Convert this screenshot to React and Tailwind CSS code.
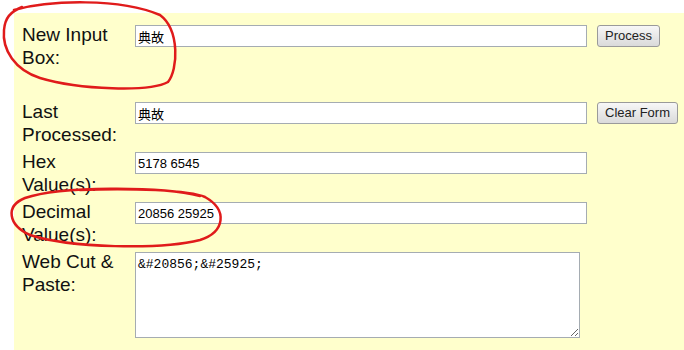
import React from "react";

const sans = "font-['Liberation_Sans','Noto_Sans_CJK_SC',Arial,sans-serif]";

function Field({ value }) {
    return (
        <input
            readOnly
            value={value}
            className={`${sans} mt-[2px] h-[22px] w-[452px] border border-[#a5acb2] bg-white px-[2px] text-[13px] text-black outline-none`}
        />
    );
}

function Btn({ children }) {
    return (
        <button
            className={`${sans} ml-[10px] mt-[2px] h-[22px] rounded-[3px] border border-[#9a9a9a] bg-gradient-to-b from-[#f7f7f7] to-[#dadada] px-[7px] text-[13px] text-[#222]`}
        >
            {children}
        </button>
    );
}

function Label({ children }) {
    return (
        <div className={`${sans} w-[121px] shrink-0 pl-[8px] text-[19px] leading-[23px] text-[#111]`}>
            {children}
        </div>
    );
}

export default function App() {
    return (
        <div className="relative h-[350px] w-[684px] overflow-hidden bg-white pl-[14px] pt-[13px]">
            <div className="h-full w-full bg-[#ffffcc] pt-[10px]">
                {/* New input */}
                <div className="flex h-[77px] items-start">
                    <Label>
                        New Input
                        <br />
                        Box:
                    </Label>
                    <Field value="典故" />
                    <Btn>Process</Btn>
                </div>

                <div className="flex h-[50px] items-start">
                    <Label>
                        Last
                        <br />
                        Processed:
                    </Label>
                    <Field value="典故" />
                    <Btn>Clear Form</Btn>
                </div>

                <div className="flex h-[50px] items-start">
                    <Label>
                        Hex
                        <br />
                        Value(s):
                    </Label>
                    <Field value="5178 6545" />
                </div>

                <div className="flex h-[50px] items-start">
                    <Label>
                        Decimal
                        <br />
                        Value(s):
                    </Label>
                    <Field value="20856 25925" />
                </div>

                <div className="flex items-start">
                    <Label>
                        Web Cut &amp;
                        <br />
                        Paste:
                    </Label>
                    <textarea
                        readOnly
                        value={"&#20856;&#25925;"}
                        className="mt-[2px] h-[86px] w-[445px] border border-[#a5acb2] bg-white px-[2px] py-[2px] font-['Liberation_Mono','Courier_New',monospace] text-[13px] text-black outline-none"
                    />
                </div>
            </div>

            {/* hand-drawn annotations */}
            <svg className="pointer-events-none absolute inset-0" width="684" height="350" fill="none">
                <path
                    d="M14 10 C50 0, 120 -2, 160 15 C180 30, 178 70, 168 82 C150 92, 80 90, 40 78 C15 70, 2 50, 4 30 C5 18, 10 12, 22 7"
                    stroke="#e01b1b"
                    strokeWidth="2.5"
                    strokeLinecap="round"
                />
                <path
                    d="M200 196 C160 186, 60 186, 25 198 C5 206, 8 225, 30 235 C70 248, 160 250, 200 240 C225 232, 228 210, 205 197 C190 190, 130 188, 80 190"
                    stroke="#e01b1b"
                    strokeWidth="2.5"
                    strokeLinecap="round"
                />
            </svg>
        </div>
    );
}
